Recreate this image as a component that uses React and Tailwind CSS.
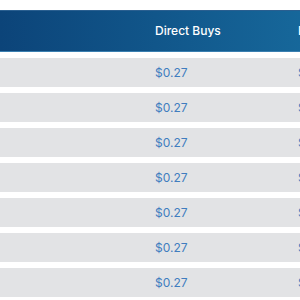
export default function App() {
  const rows = Array.from({ length: 7 }, () => ({ direct: '$0.27', other: '$0.27' }))

  return (
    <div className="w-[300px] h-[300px] overflow-hidden bg-white pt-[10px]" style={{ fontFamily: 'Inter, "Open Sans", sans-serif' }}>
      <div className="w-[440px] flex flex-col gap-[6px]">
        {/* Header */}
        <div className="h-[42px] flex items-center bg-gradient-to-r from-[#0c4479] to-[#1c78aa] border-t border-[#2a5f90] border-b border-b-[#3a7fb0] text-white text-[12px] font-medium">
          <div className="w-[143px]"></div>
          <div className="w-[143px] pl-[12px]">Direct Buys</div>
          <div className="w-[143px] pl-[12px]">Direct Sells</div>
        </div>

        {/* Rows */}
        {rows.map((row, i) => (
          <div key={i} className="h-[29px] flex items-center bg-[#e2e3e5] text-[#3f7dbf] text-[12px]">
            <div className="w-[143px]"></div>
            <div className="w-[143px] pl-[12px]">{row.direct}</div>
            <div className="w-[143px] pl-[12px]">{row.other}</div>
          </div>
        ))}
      </div>
    </div>
  )
}
